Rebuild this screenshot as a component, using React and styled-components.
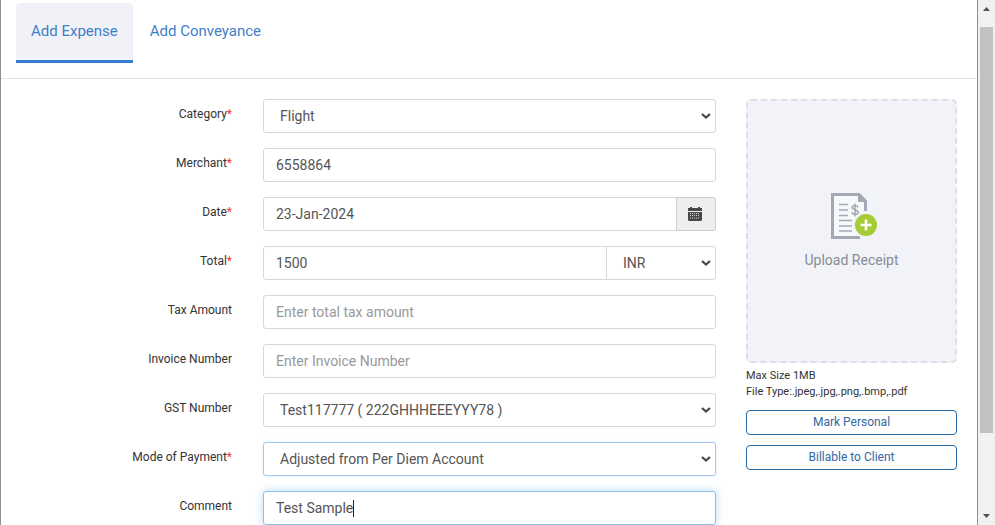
import React from "react";
import styled, { createGlobalStyle, css } from "styled-components";

const GlobalStyle = createGlobalStyle`
  *, *::before, *::after { box-sizing: border-box; }
  body {
    margin: 0;
    background: #fff;
    color: #333;
    font-family: Roboto, "Liberation Sans", sans-serif;
    font-size: 14px;
  }
  button, input, select { font: inherit; }
`;

const Window = styled.div`
  display: flex;
  height: 100vh;
  overflow: hidden;
`;

const Page = styled.main`
  flex: 1;
  min-width: 0;
  overflow-y: auto;
  scrollbar-width: none;
  border: solid #8e8e93;
  border-width: 0 1px;
`;

const ScrollTrack = styled.div`
  flex: none;
  width: 17px;
  display: flex;
  flex-direction: column;
  background: #f1f1f1;
`;

const ScrollArrow = styled.svg`
  display: block;
  flex: none;
  width: 17px;
  height: 17px;
  fill: #505050;
`;

const ScrollRail = styled.div`
  flex: 1;
  padding: 10px 2px 0;
`;

const ScrollThumb = styled.div`
  height: 84.5%;
  background: #c1c1c1;
`;

const Tabs = styled.nav`
  display: flex;
  padding: 3px 15px 15px;
  border-bottom: 1px solid #e3e3e3;
`;

const Tab = styled.a`
  height: 60px;
  padding: 18px 15px 0;
  margin-right: 2px;
  border-bottom: 3px solid ${(p) => (p.$active ? "#337fcb" : "transparent")};
  border-radius: ${(p) => (p.$active ? "4px 4px 0 0" : "0")};
  background: ${(p) => (p.$active ? "#f0f2f7" : "transparent")};
  color: #3f80c8;
  font-size: 15px;
  line-height: 20px;
  text-decoration: none;
`;

const Form = styled.form`
  display: grid;
  grid-template-columns: minmax(0, 699fr) minmax(0, 211fr);
  gap: 30px;
  padding: 20px 20px 15px 16px;
`;

const Fields = styled.div`
  display: flex;
  flex-direction: column;
  gap: 15px;
`;

const Row = styled.div`
  display: grid;
  grid-template-columns: minmax(0, 215fr) minmax(0, 453fr);
  gap: 31px;
`;

const Label = styled.label`
  padding-top: 7px;
  font-size: 12px;
  line-height: 16px;
  text-align: right;
`;

const Required = styled.span`
  color: #f33;
`;

const Control = styled.div`
  position: relative;
  display: flex;
`;

const tones = {
  plain: css`
    border-color: #d8d8d8;
  `,
  fading: css`
    border-color: #a2c9eb;
    box-shadow: 0 0 4px rgba(102, 175, 233, 0.2);
  `,
  focused: css`
    border-color: #8abfe8;
    box-shadow: 0 0 8px rgba(102, 175, 233, 0.45);
  `,
};

const fieldStyle = css`
  flex: 1;
  min-width: 0;
  width: 100%;
  height: 34px;
  padding: 6px 12px;
  border: 1px solid;
  border-radius: 3px;
  outline: none;
  background: #fff;
  color: #555;
  line-height: 20px;
  ${(p) => tones[p.$tone || "plain"]}
`;

const Input = styled.input`
  ${fieldStyle}
  caret-color: ${(p) => (p.$tone === "focused" ? "transparent" : "auto")};
  ${(p) => p.$joined && "border-top-right-radius: 0; border-bottom-right-radius: 0;"}
  &::placeholder { color: #999; opacity: 1; }
`;

const chevron =
  "data:image/svg+xml,%3Csvg xmlns='http://www.w3.org/2000/svg' width='10' height='8' viewBox='0 0 10 8'%3E%3Cpath d='M1 2l4 3.500L9 2' fill='none' stroke='%23484848' stroke-width='2.200'/%3E%3C/svg%3E";

const Select = styled.select`
  ${fieldStyle}
  appearance: none;
  padding: 6px 24px 6px 16px;
  background: #fff url("${chevron}") no-repeat right 4px center;
`;

const CurrencySelect = styled(Select)`
  flex: 0 0 110px;
  margin-left: -1px;
  border-radius: 0 3px 3px 0;
`;

const DateButton = styled.button`
  flex: none;
  display: flex;
  align-items: center;
  justify-content: center;
  width: 40px;
  margin-left: -1px;
  padding: 0 2px 0 0;
  border: 1px solid #ccc;
  border-radius: 0 3px 3px 0;
  background: #eee;
`;

const TextCaret = styled.span`
  position: absolute;
  top: 9px;
  left: 90px;
  width: 1px;
  height: 17px;
  background: #222;
`;

const Side = styled.aside`
  display: flex;
  flex-direction: column;
`;

const Upload = styled.button`
  display: flex;
  flex-direction: column;
  align-items: center;
  gap: 10px;
  height: 264px;
  padding: 92px 0 0;
  border: 2px dashed #dcdfe6;
  border-radius: 5px;
  background: #f2f3f8;
  color: #868b94;
  font-size: 14px;
  line-height: 20px;
`;

const UploadNote = styled.p`
  margin: 5px 0 10px;
  font-size: 11px;
  line-height: 16px;
`;

const ActionButton = styled.button`
  height: 25px;
  margin-bottom: 10px;
  padding: 0 0 2px;
  border: 1px solid #286aa6;
  border-radius: 4px;
  background: #fff;
  color: #33689f;
  font-size: 12px;
  line-height: 16px;
`;

function CalendarIcon() {
  return (
    <svg width="14" height="14" viewBox="0 0 14 14" aria-hidden="true">
      <path d="M0 1h2V0h2v1h6V0h2v1h2v3H0zM0 5h14v8l-1 1H1l-1-1z" fill="#484848" />
      <path
        d="M2 6.500h10M2 8.500h10M2 11h10"
        stroke="#d4d4d4"
        strokeWidth="1"
        strokeDasharray="1 1"
      />
    </svg>
  );
}

function ReceiptIcon() {
  return (
    <svg width="50" height="47" viewBox="-4 0 50 47" fill="none" aria-hidden="true">
      <path d="M1.500 1.500H28L34.500 8V44.500H1.500z" fill="#f7f8fb" />
      <path d="M29 44.500H1.500V1.500H28L34.500 8V18" stroke="#a3a8b4" strokeWidth="3" />
      <path d="M27 1.500V9h8z" fill="#a3a8b4" />
      <path d="M8 11.500h9M8 17h9M8 22.500h9M8 27.500h13M8 33h13M8 38h13" stroke="#a3a8b4" strokeWidth="1.700" />
      <path
        d="M27 14.500c-.4-1.500-1.500-2-3-2-1.700 0-2.800.8-2.800 2.100 0 3.100 6 1.500 6 4.600 0 1.400-1.200 2.200-3 2.200s-3-.8-3.300-2.300M24 10.500v13"
        stroke="#a3a8b4"
        strokeWidth="1.500"
      />
      <circle cx="35" cy="32" r="13" fill="#f2f3f8" />
      <circle cx="35" cy="32" r="11" fill="#a5cc35" />
      <path d="M35 26.500v11M29.500 32h11" stroke="#fff" strokeWidth="2.600" />
    </svg>
  );
}

function Field({ id, label, required, children }) {
  return (
    <Row>
      <Label htmlFor={id}>
        {label}
        {required && <Required>*</Required>}
      </Label>
      <Control>{children}</Control>
    </Row>
  );
}

export default function App() {
  return (
    <>
      <GlobalStyle />
      <Window>
        <Page>
          <Tabs>
            <Tab href="#expense" $active aria-current="page">Add Expense</Tab>
            <Tab href="#conveyance">Add Conveyance</Tab>
          </Tabs>
          <Form onSubmit={(e) => e.preventDefault()}>
            <Fields>
              <Field id="category" label="Category" required>
                <Select id="category"><option>Flight</option></Select>
              </Field>
              <Field id="merchant" label="Merchant" required>
                <Input id="merchant" defaultValue="6558864" />
              </Field>
              <Field id="date" label="Date" required>
                <Input id="date" defaultValue="23-Jan-2024" $joined />
                <DateButton type="button" aria-label="Pick a date"><CalendarIcon /></DateButton>
              </Field>
              <Field id="total" label="Total" required>
                <Input id="total" defaultValue="1500" $joined />
                <CurrencySelect aria-label="Currency"><option>INR</option></CurrencySelect>
              </Field>
              <Field id="tax" label="Tax Amount">
                <Input id="tax" placeholder="Enter total tax amount" />
              </Field>
              <Field id="invoice" label="Invoice Number">
                <Input id="invoice" placeholder="Enter Invoice Number" />
              </Field>
              <Field id="gst" label="GST Number">
                <Select id="gst"><option>Test117777 ( 222GHHHEEEYYY78 )</option></Select>
              </Field>
              <Field id="payment" label="Mode of Payment" required>
                <Select id="payment" $tone="fading"><option>Adjusted from Per Diem Account</option></Select>
              </Field>
              <Field id="comment" label="Comment">
                <Input id="comment" defaultValue="Test Sample" $tone="focused" />
                <TextCaret />
              </Field>
            </Fields>
            <Side>
              <Upload type="button">
                <ReceiptIcon />
                Upload Receipt
              </Upload>
              <UploadNote>
                Max Size 1MB
                <br />
                File Type:.jpeg,.jpg,.png,.bmp,.pdf
              </UploadNote>
              <ActionButton type="button">Mark Personal</ActionButton>
              <ActionButton type="button">Billable to Client</ActionButton>
            </Side>
          </Form>
        </Page>
        <ScrollTrack aria-hidden="true">
          <ScrollArrow viewBox="0 0 17 17"><path d="M5 11h7L8.500 7z" /></ScrollArrow>
          <ScrollRail><ScrollThumb /></ScrollRail>
          <ScrollArrow viewBox="0 0 17 17"><path d="M5 6h7l-3.500 4z" /></ScrollArrow>
        </ScrollTrack>
      </Window>
    </>
  );
}
